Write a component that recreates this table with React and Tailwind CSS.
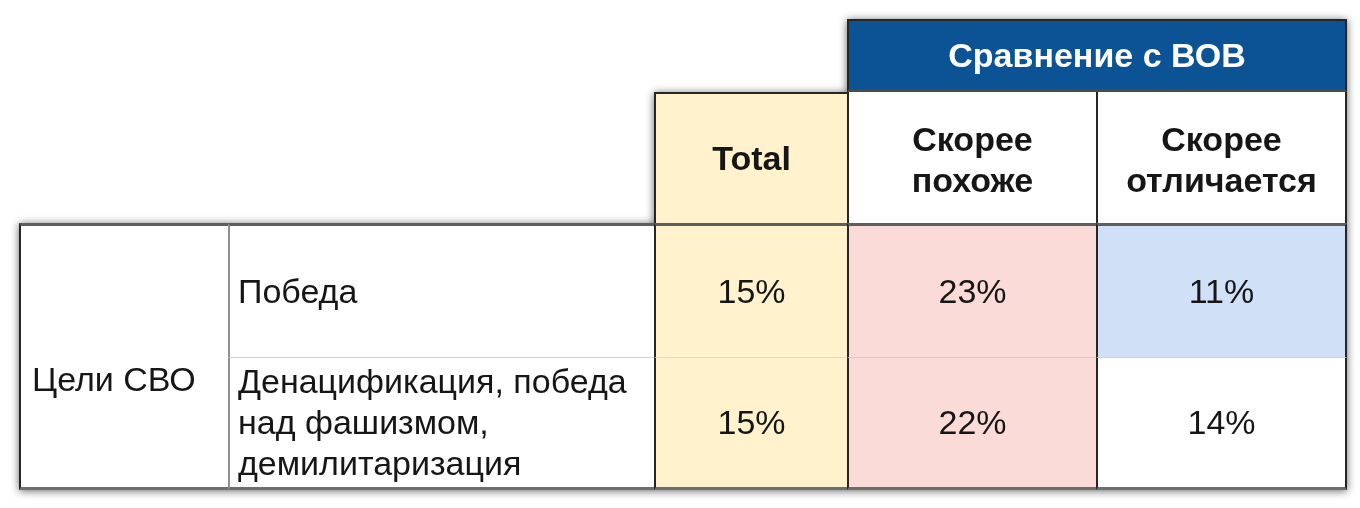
export default function App() {
  const dark = "border-[#262626]";
  return (
    <main className="min-h-screen bg-white pt-[19px] pl-[19px] font-['Liberation_Sans',Arial,sans-serif] text-[34px] leading-[41px] text-[#161616]">
      <div className="grid w-max grid-cols-[209px_426px_193px_249px_251px] grid-rows-[73px_131px_134px_133px] drop-shadow-[0_1px_4px_rgba(0,0,0,0.6)]">
        {/* row 1 */}
        <div className="col-span-3" />
        <div className={`col-span-2 flex items-center justify-center border-2 border-b-[3px] ${dark} border-b-[#4a4a4a] bg-[#0b5394] font-bold text-white`}>
          Сравнение с ВОВ
        </div>

        {/* row 2 */}
        <div className="col-span-2" />
        <div className={`flex items-center justify-center border-l-2 border-t-2 ${dark} bg-[#fff2cc] font-bold`}>
          Total
        </div>
        <div className={`flex items-center justify-center border-l-2 ${dark} bg-white pt-[4px] text-center font-bold`}>
          Скорее
          <br />
          похоже
        </div>
        <div className={`flex items-center justify-center border-x-2 ${dark} bg-white pt-[4px] text-center font-bold`}>
          Скорее
          <br />
          отличается
        </div>

        {/* row 3 */}
        <div className={`row-span-2 flex items-center border-l-2 ${dark} border-t-[3px] border-t-[#5e5e5e] border-b-[3px] border-b-[#6e6e6e] bg-white pl-[11px] pt-[46px]`}>
          Цели СВО
        </div>
        <div className="flex items-center border-l-2 border-l-[#8f8f8f] border-t-[3px] border-t-[#5e5e5e] bg-white pl-[8px]">
          Победа
        </div>
        <div className={`flex items-center justify-center border-l-2 ${dark} border-t-[3px] border-t-[#5e5e5e] bg-[#fff2cc]`}>
          15%
        </div>
        <div className={`flex items-center justify-center border-l-2 ${dark} border-t-[3px] border-t-[#5e5e5e] bg-[#fadbd7]`}>
          23%
        </div>
        <div className={`flex items-center justify-center border-x-2 ${dark} border-t-[3px] border-t-[#5e5e5e] bg-[#d0e1f7]`}>
          11%
        </div>

        {/* row 4 */}
        <div className="flex items-center border-l-2 border-l-[#8f8f8f] border-t border-t-[#d4d4d4] border-b-[3px] border-b-[#6e6e6e] bg-white pl-[8px]">
          Денацификация, победа
          <br />
          над фашизмом,
          <br />
          демилитаризация
        </div>
        <div className={`flex items-center justify-center border-l-2 ${dark} border-t border-t-[#e6d9b5] border-b-[3px] border-b-[#6e6e6e] bg-[#fff2cc]`}>
          15%
        </div>
        <div className={`flex items-center justify-center border-l-2 ${dark} border-t border-t-[#e2c4c0] border-b-[3px] border-b-[#6e6e6e] bg-[#fadbd7]`}>
          22%
        </div>
        <div className={`flex items-center justify-center border-x-2 ${dark} border-t border-t-[#d4d4d4] border-b-[3px] border-b-[#6e6e6e] bg-white`}>
          14%
        </div>
      </div>
    </main>
  );
}
